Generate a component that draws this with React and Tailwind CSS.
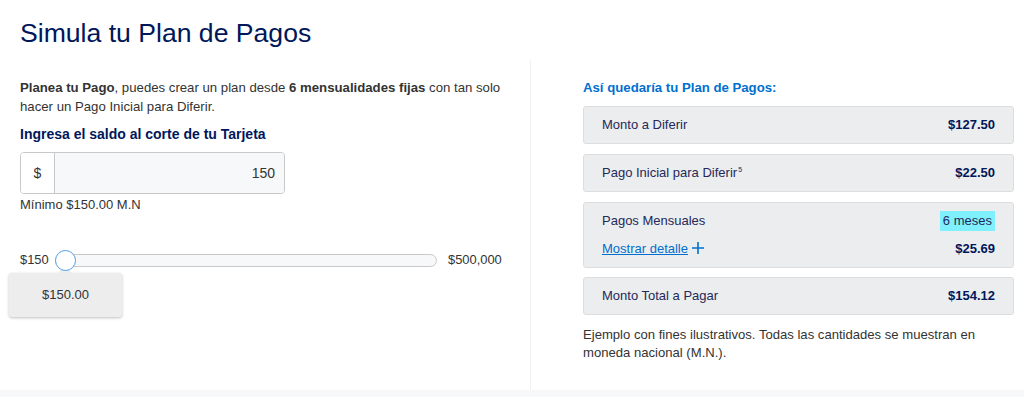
import React, { useState } from 'react';

const Row = ({ label, value, sup }) => (
  <div className="flex items-center justify-between h-[38px] px-[18px] bg-[#ecedee] border border-[#dcdddf] rounded-[3px]">
    <span className="text-[13px] text-[#24295a]">
      {label}
      {sup && <span className="relative -top-[5px] text-[7px] ml-[1px]">{sup}</span>}
    </span>
    <span className="text-[13px] font-bold text-[#00175a]">{value}</span>
  </div>
);

const App = () => {
  const [amount, setAmount] = useState('150');

  return (
    <div className="w-full bg-white text-[#333] font-['Liberation_Sans',Arial,sans-serif]">
      {/* Title */}
      <div className="pt-[16px] px-5">
        <h1 className="text-[26.6px] leading-[34px] font-normal text-[#00175a]">
          Simula tu Plan de Pagos
        </h1>
      </div>

      <div className="flex mt-[10px]">
        {/* Left column */}
        <div className="w-[530px] pl-5 pr-[20px] pt-[18px] h-[330px]">
          <p className="text-[13.2px] leading-[19px] text-[#333]">
            <b>Planea tu Pago</b>, puedes crear un plan desde <b>6 mensualidades fijas</b> con tan solo hacer un Pago Inicial para Diferir.
          </p>
          <h2 className="mt-[8px] text-[14px] leading-[20px] font-bold text-[#00175a]">
            Ingresa el saldo al corte de tu Tarjeta
          </h2>
          <div className="mt-[8px] flex w-[265px] h-[42px] border border-[#c8c9cb] rounded-[4px] overflow-hidden">
            <span className="w-[34px] flex items-center justify-center bg-white border-r border-[#c8c9cb] text-[14px] text-[#333]">$</span>
            <input
              value={amount}
              onChange={(e) => setAmount(e.target.value)}
              className="flex-1 bg-[#f7f8f9] text-right pr-[9px] text-[14px] text-[#333] outline-none"
            />
          </div>
          <p className="mt-[2px] text-[13px] leading-[18px] text-[#333]">Mínimo $150.00 M.N</p>

          {/* Slider */}
          <div className="mt-[36px] flex items-center h-[20px] text-[12.9px] text-[#333]">
            <span className="w-[35px]">$150</span>
            <div className="relative w-[382px] h-[13px] rounded-full bg-[#f7f8f9] border border-[#c8c9cb]">
              <div className="absolute -left-[1px] -top-[5px] w-[21px] h-[21px] rounded-full bg-white border-[1.5px] border-[#4f9ee8] z-20" />
              <div className="absolute left-[-47px] top-[18px] w-[113px] h-[44px] bg-[#ededee] rounded-[3px] shadow-[0_1px_3px_rgba(0,0,0,0.25)] flex items-center justify-center z-10">
                <div className="absolute -top-[5px] left-[51px] w-[10px] h-[10px] bg-[#ededee] rotate-45" />
                <span className="relative text-[13px] text-[#333]">$150.00</span>
              </div>
            </div>
            <span className="ml-[11px]">$500,000</span>
          </div>
        </div>

        {/* Right column */}
        <div className="flex-1 border-l border-[#f0f1f2] pl-[52px] pr-[10px] pt-[18px] h-[330px]">
          <h3 className="text-[13.2px] leading-[19px] font-bold text-[#006fcf]">Así quedaría tu Plan de Pagos:</h3>
          <div className="mt-[9px] flex flex-col gap-[10px]">
            <Row label="Monto a Diferir" value="$127.50" />
            <Row label="Pago Inicial para Diferir" sup="5" value="$22.50" />
            <div className="h-[66px] px-[18px] pt-[7px] bg-[#ecedee] border border-[#dcdddf] rounded-[3px]">
              <div className="flex items-center justify-between h-[22px]">
                <span className="text-[13px] text-[#24295a]">Pagos Mensuales</span>
                <span className="text-[13px] text-[#24295a] bg-[#7ff0fd] px-[3px] leading-[20px]">6 meses</span>
              </div>
              <div className="flex items-center justify-between h-[20px] mt-[7px]">
                <span className="flex items-center">
                  <a href="#" className="text-[13px] text-[#006fcf] underline">Mostrar detalle</a>
                  <svg width="14" height="14" viewBox="0 0 14 14" className="ml-[3px] -mt-[3px]">
                    <path d="M7 1v12M1 7h12" stroke="#006fcf" strokeWidth="1.6" fill="none" />
                  </svg>
                </span>
                <span className="text-[13px] font-bold text-[#00175a]">$25.69</span>
              </div>
            </div>
            <div className="-mt-[1px]">
              <Row label="Monto Total a Pagar" value="$154.12" />
            </div>
          </div>
          <p className="mt-[11px] text-[13.1px] leading-[18px] text-[#333] pr-[20px]">
            Ejemplo con fines ilustrativos. Todas las cantidades se muestran en moneda nacional (M.N.).
          </p>
        </div>
      </div>

      <div className="h-[20px] bg-[#f7f8f9]" />
    </div>
  );
};

export default App;
